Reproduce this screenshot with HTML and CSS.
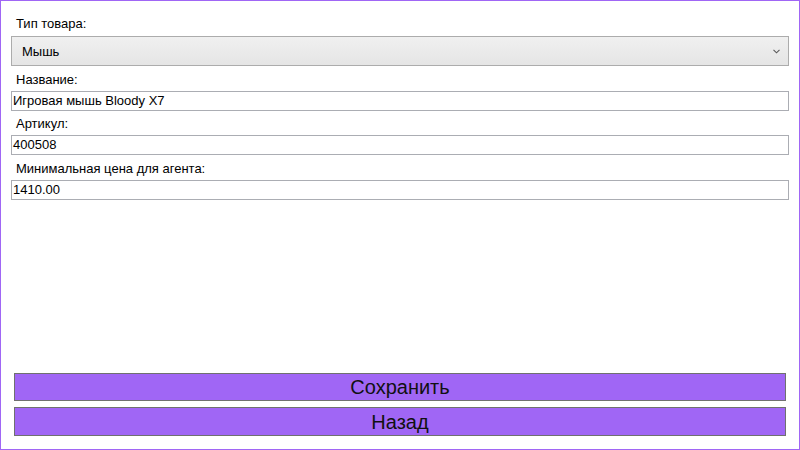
FILE: index.html
```html
<!DOCTYPE html>
<html lang="ru">
<head>
<meta charset="utf-8">
<title>Товар</title>
<link rel="stylesheet" href="styles.css">
</head>
<body>
<div class="window">
  <div class="form">
    <div class="label label-first">Тип товара:</div>
    <div class="combo">
      <span class="combo-text">Мышь</span>
      <svg class="chevron" width="7" height="5" viewBox="0 0 7 5"><polyline points="0.5,0.8 3.5,3.8 6.5,0.8" fill="none" stroke="#5a5a5a" stroke-width="1.1"/></svg>
    </div>
    <div class="label">Название:</div>
    <div class="field">Игровая мышь Bloody X7</div>
    <div class="label label-short">Артикул:</div>
    <div class="field">400508</div>
    <div class="label">Минимальная цена для агента:</div>
    <div class="field">1410.00</div>
  </div>
  <div class="buttons">
    <div class="btn btn-save">Сохранить</div>
    <div class="btn btn-back">Назад</div>
  </div>
</div>
</body>
</html>
```

FILE: styles.css
```css
html, body {
  margin: 0;
  padding: 0;
  background: #ffffff;
}
.window {
  box-sizing: border-box;
  width: 800px;
  height: 450px;
  border: 1px solid #a066f5;
  display: flex;
  flex-direction: column;
  justify-content: space-between;
  font-family: "Liberation Sans", Arial, sans-serif;
  color: #000;
}
.form {
  display: flex;
  flex-direction: column;
  padding: 0 10px 0 10px;
}
.label {
  height: 25px;
  line-height: 27px;
  font-size: 13px;
  padding-left: 5px;
}
.label-short {
  height: 24px;
  line-height: 26px;
}
.label-first {
  margin-top: 11px;
  height: 24px;
  line-height: 24px;
}
.combo {
  box-sizing: border-box;
  height: 30px;
  border: 1px solid #acacac;
  background: linear-gradient(#f0f0f0, #e5e5e5);
  display: flex;
  align-items: center;
  justify-content: space-between;
  padding: 0 8px 0 10px;
  font-size: 13px;
}
.chevron {
  display: block;
}
.field {
  box-sizing: border-box;
  height: 20px;
  border: 1px solid #abadb3;
  padding-left: 1px;
  font-size: 13px;
  line-height: 18px;
}
.buttons {
  display: flex;
  flex-direction: column;
  gap: 6px;
  padding: 0 13px 13px 13px;
}
.btn {
  box-sizing: border-box;
  border: 1px solid #707070;
  background: #a066f5;
  text-align: center;
  font-size: 20px;
  color: #111;
}
.btn-save {
  height: 28px;
  line-height: 26px;
}
.btn-back {
  height: 29px;
  line-height: 28px;
}
```
